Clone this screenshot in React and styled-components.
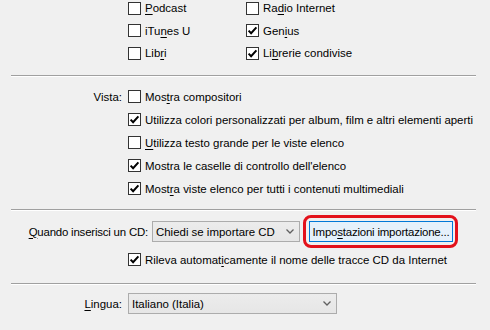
import React from "react";
import styled, { createGlobalStyle } from "styled-components";

const GlobalStyle = createGlobalStyle`
  html, body {
    margin: 0;
    padding: 0;
    background: #f0f0f0;
  }
  body {
    font-family: "Liberation Sans", Arial, sans-serif;
    font-size: 11.45px;
    color: #000;
  }
`;

const Page = styled.div`
  width: 490px;
  height: 330px;
  overflow: hidden;
  background: #f0f0f0;
  display: flex;
  flex-direction: column;
`;

const TopSection = styled.div`
  height: 78px;
  margin-top: -3px;
  display: grid;
  grid-template-columns: 118px auto;
  grid-auto-rows: 22.5px;
  padding-left: 128px;
  align-content: start;
`;

const Separator = styled.div`
  height: 0;
  margin: 0 14px 0 11px;
  border-top: 1px solid #a0a0a0;
  border-bottom: 1px solid #ffffff;
`;

const VistaSection = styled.div`
  height: 124px;
  padding-top: 8px;
  display: grid;
  grid-template-columns: 122px 1fr;
  column-gap: 6px;
  grid-auto-rows: 23px;
  align-content: start;
`;

const FieldLabel = styled.div`
  text-align: right;
  align-self: center;
  grid-column: 1;
  white-space: nowrap;
`;

const CdSection = styled.div`
  height: 68px;
  padding-top: 4px;
  display: flex;
  flex-direction: column;
`;

const CdRow = styled.div`
  display: flex;
  align-items: center;
  height: 33px;
`;

const CdLabel = styled.div`
  width: 148px;
  margin-right: 4px;
  text-align: right;
  white-space: nowrap;
  letter-spacing: -0.2px;
`;

const LinguaSection = styled.div`
  padding-top: 8px;
  display: grid;
  grid-template-columns: 122px 1fr;
  column-gap: 6px;
  align-items: center;
`;

const Row = styled.label`
  display: flex;
  align-items: center;
  height: ${(p) => p.$h || 23}px;
  grid-column: ${(p) => p.$col || "auto"};
  padding-left: ${(p) => p.$indent || 0}px;
  white-space: nowrap;
`;

const Box = styled.span`
  width: 11px;
  height: 11px;
  border: 1px solid #333333;
  background: #ffffff;
  flex: none;
  display: flex;
  align-items: center;
  justify-content: center;
  margin-right: 4px;
`;

const Select = styled.div`
  box-sizing: border-box;
  width: ${(p) => p.$w}px;
  height: 21px;
  border: 1px solid #acacac;
  background: linear-gradient(#ececec, #e6e6e6);
  display: flex;
  align-items: center;
  justify-content: space-between;
  padding: 0 5px 0 3px;
  white-space: nowrap;
`;

const Highlight = styled.span`
  display: inline-flex;
  margin-left: 3px;
  padding: 3px 2px 3px 3px;
  border: 3px solid #e3121b;
  border-radius: 8px;
`;

const Button = styled.button`
  box-sizing: border-box;
  width: 144px;
  height: 21px;
  border: 1px solid #0078d7;
  background: #e5f1fb;
  font: inherit;
  letter-spacing: -0.2px;
  color: #000;
  padding: 0;
  margin: 0;
  white-space: nowrap;
`;

const Key = styled.u`
  text-decoration-thickness: 1px;
  text-underline-offset: 2px;
`;

const Tick = () => (
  <svg width="11" height="11" viewBox="0 0 11 11">
    <path d="M1.6 5.6 L4.1 8.2 L9.4 2.4" fill="none" stroke="#000" strokeWidth="2" />
  </svg>
);

const Chevron = () => (
  <svg width="8" height="5" viewBox="0 0 8 5">
    <path d="M0.5 0.5 L4 4 L7.5 0.5" fill="none" stroke="#606060" strokeWidth="1.3" />
  </svg>
);

// label text with one accelerator letter underlined
const Accel = ({ text, at }) => {
  if (at == null) return <span>{text}</span>;
  return (
    <span>
      {text.slice(0, at)}
      <Key>{text[at]}</Key>
      {text.slice(at + 1)}
    </span>
  );
};

const Check = ({ checked, text, at, ...rest }) => (
  <Row {...rest}>
    <Box>{checked && <Tick />}</Box>
    <Accel text={text} at={at} />
  </Row>
);

const sources = [
  { text: "Podcast", at: 0, checked: false },
  { text: "Radio Internet", at: 2, checked: false },
  { text: "iTunes U", at: 3, checked: false },
  { text: "Genius", at: 3, checked: true },
  { text: "Libri", at: 3, checked: false },
  { text: "Librerie condivise", at: 2, checked: true },
];

const vista = [
  { text: "Mostra compositori", at: 3, checked: false },
  { text: "Utilizza colori personalizzati per album, film e altri elementi aperti", checked: true },
  { text: "Utilizza testo grande per le viste elenco", at: 0, checked: false },
  { text: "Mostra le caselle di controllo dell'elenco", checked: true },
  { text: "Mostra viste elenco per tutti i contenuti multimediali", at: 4, checked: true },
];

const App = () => {
  return (
    <>
      <GlobalStyle />
      <Page>
        <TopSection>
          {sources.map((s, i) => (
            <Check key={i} $h={22.5} checked={s.checked} text={s.text} at={s.at} />
          ))}
        </TopSection>
        <Separator />
        <VistaSection>
          <FieldLabel style={{ gridRow: 1 }}>Vista:</FieldLabel>
          {vista.map((v, i) => (
            <Check key={i} $col={2} checked={v.checked} text={v.text} at={v.at} />
          ))}
        </VistaSection>
        <Separator />
        <CdSection>
          <CdRow>
            <CdLabel>
              <Accel text="Quando inserisci un CD:" at={0} />
            </CdLabel>
            <Select $w={148}>
              <span>Chiedi se importare CD</span>
              <Chevron />
            </Select>
            <Highlight>
              <Button>
                <Accel text="Impostazioni importazione..." at={4} />
              </Button>
            </Highlight>
          </CdRow>
          <Check
            $indent={128}
            checked
            text="Rileva automaticamente il nome delle tracce CD da Internet"
            at={14}
          />
        </CdSection>
        <Separator />
        <LinguaSection>
          <FieldLabel>
            <Accel text="Lingua:" at={0} />
          </FieldLabel>
          <Select $w={209}>
            <span>Italiano (Italia)</span>
            <Chevron />
          </Select>
        </LinguaSection>
      </Page>
    </>
  );
};

export default App;
